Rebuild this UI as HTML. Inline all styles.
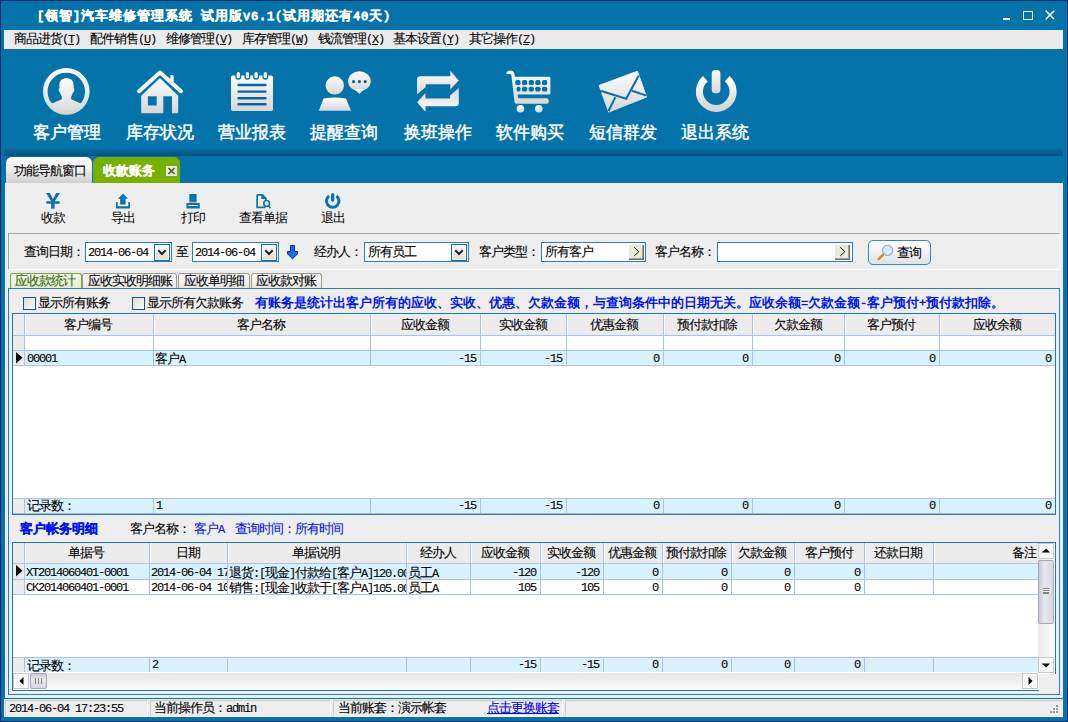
<!DOCTYPE html>
<html><head><meta charset="utf-8">
<style>
@font-face{font-family:"Liberation Mono";src:local("Liberation Mono");unicode-range:U+0020-007E;size-adjust:89.74%;}
*{box-sizing:border-box}
html,body{margin:0;padding:0;width:1068px;height:722px;overflow:hidden}
body{position:relative;background:#0373a9;font-family:"Liberation Mono","Liberation Sans",sans-serif;font-size:13px;letter-spacing:-1px;color:#000}
.a{position:absolute}
.t{position:absolute;white-space:nowrap;line-height:12px;margin-top:2px;-webkit-text-stroke:0.1px currentColor}
.n{margin-top:0}
.big{position:absolute;top:124px;letter-spacing:0;color:#fff;font-size:17px;font-weight:normal;-webkit-text-stroke:0.45px #fff;line-height:18px;white-space:nowrap;font-family:"Liberation Sans",sans-serif;}
.ico{position:absolute;top:60px;width:60px;height:60px}
.sb{position:absolute;top:213px;white-space:nowrap;line-height:12px;text-align:center}
.box{position:absolute;background:#fff;border:1px solid #2b7cba}
.dd{position:absolute;top:1px;right:1px;width:16px;height:17px;border:1px solid #0b6fb0;box-shadow:inset 0 0 0 1px #fff;background:linear-gradient(#fafafa,#dcdcdc)}
.gb{position:absolute;background:#ebe8d8;box-shadow:inset -1px -1px 0 #6e6b5c,inset -2px -2px 0 #aaa794}
.cb{position:absolute;width:13px;height:13px;border:1px solid #1c5180;background:linear-gradient(135deg,#dcdcd6,#fdfdfd)}
.g{position:absolute;overflow:hidden;background:#fff}
.hl{position:absolute;background:#a9c2f0}
.st{position:absolute;top:700px;height:17px;border:1px solid #d0ccbe;border-right-color:#fff;border-bottom-color:#fff;background:#ededed}
</style></head><body>

<!-- window border -->
<div class="a" style="left:0;top:0;width:1068px;height:722px;border:1px solid #082a68"></div>
<!-- title -->
<div class="t" style="left:37px;top:9px;color:#fff;font-weight:bold;font-size:13px;letter-spacing:1px;-webkit-text-stroke:0.35px #fff">[领智]汽车维修管理系统 试用版v6.1(试用期还有40天)</div>
<!-- window controls -->
<div class="a" style="left:1003px;top:18px;width:7px;height:2px;background:#fff"></div>
<div class="a" style="left:1023px;top:11px;width:10px;height:9px;border:1.4px solid #fff"></div>
<svg class="a" style="left:1045px;top:10px" width="10" height="10"><path d="M0.8 0.8L9.2 9.2M9.2 0.8L0.8 9.2" stroke="#fff" stroke-width="1.6"/></svg>
<!-- menu -->
<div class="a" style="left:4px;top:30px;width:1059px;height:19px;background:#ececec"></div>
<div class="t" style="left:14px;top:32px">商品进货(<u>T</u>)</div>
<div class="t" style="left:90px;top:32px">配件销售(<u>U</u>)</div>
<div class="t" style="left:166px;top:32px">维修管理(<u>V</u>)</div>
<div class="t" style="left:242px;top:32px">库存管理(<u>W</u>)</div>
<div class="t" style="left:318px;top:32px">钱流管理(<u>X</u>)</div>
<div class="t" style="left:393px;top:32px">基本设置(<u>Y</u>)</div>
<div class="t" style="left:469px;top:32px">其它操作(<u>Z</u>)</div>

<!-- big toolbar labels -->
<div class="big" style="left:33px">客户管理</div>
<div class="big" style="left:126px">库存状况</div>
<div class="big" style="left:218px">营业报表</div>
<div class="big" style="left:310px">提醒查询</div>
<div class="big" style="left:404px">换班操作</div>
<div class="big" style="left:496px">软件购买</div>
<div class="big" style="left:589px">短信群发</div>
<div class="big" style="left:681px">退出系统</div>

<!-- toolbar shadow band -->
<div class="a" style="left:4px;top:148px;width:1059px;height:8px;background:linear-gradient(#0670a6,#005080)"></div>

<!-- tabs -->
<div class="a" style="left:6px;top:157px;width:86px;height:26px;border-radius:6px 6px 0 0;background:linear-gradient(#ffffff,#f2f2f2 40%,#cfcfcf)"></div>
<div class="t" style="left:14px;top:164px">功能导航窗口</div>
<div class="a" style="left:93px;top:157px;width:87px;height:26px;border-radius:6px 6px 0 0;background:#78b000"></div>
<div class="t" style="left:103px;top:164px;color:#fff;font-weight:bold;letter-spacing:0;-webkit-text-stroke:0.3px #fff">收款账务</div>
<div class="a" style="left:166px;top:166px;width:11px;height:10px;background:#e8e8e8"></div>
<svg class="a" style="left:166px;top:166px" width="11" height="10"><path d="M2.5 2L8.5 8M8.5 2L2.5 8" stroke="#3d5f12" stroke-width="1.5"/></svg>

<!-- content panel -->
<div class="a" style="left:5px;top:183px;width:1058px;height:515px;background:#eeeeee"></div>

<!-- big icons -->
<svg class="ico" style="left:36px" viewBox="0 0 60 60"><defs><linearGradient id="g1" x1="0" y1="0" x2="0" y2="1"><stop offset="0" stop-color="#fefefe"/><stop offset="1" stop-color="#d6d6d6"/></linearGradient><clipPath id="c1"><circle cx="30.3" cy="31.4" r="19.2"/></clipPath></defs>
<circle cx="30.3" cy="31.4" r="21" fill="none" stroke="url(#g1)" stroke-width="4.6"/>
<g clip-path="url(#c1)" fill="url(#g1)"><path d="M30.5 18.2 C35.6 18.2 37.8 21 37.6 26 L37.6 28.3 Q38.7 28.6 38.3 30.5 Q37.9 32.3 37 32.6 Q36.2 35 35.2 36.5 L35.2 39.3 L44.8 43.4 L51 46 L51 56 L10 56 L10 46 L16 43.4 L25.8 39.3 L25.8 36.5 Q24.8 35 24 32.6 Q23.1 32.3 22.7 30.5 Q22.3 28.6 23.4 28.3 L23.4 26 C23.2 21 25.4 18.2 30.5 18.2Z"/></g></svg>

<svg class="ico" style="left:130px" viewBox="0 0 60 60"><defs><linearGradient id="g2" x1="0" y1="0" x2="0" y2="1"><stop offset="0" stop-color="#fefefe"/><stop offset="1" stop-color="#d6d6d6"/></linearGradient></defs>
<path d="M9 31.2 L30 12.6 L51 31.2" fill="none" stroke="#f8f8f8" stroke-width="4" stroke-linecap="round" stroke-linejoin="round"/>
<rect x="40.3" y="15" width="3.4" height="9" rx="1" fill="#f6f6f6"/>
<path d="M11.2 35.8 L30 17.9 L48.2 35.8 L48.2 52.3 Q48.2 53.3 47.2 53.3 L42 53.3 L42 36.2 L33.3 36.2 L33.3 53.3 L12.2 53.3 Q11.2 53.3 11.2 52.3 Z M17.9 36.2 L17.9 45.4 L26.7 45.4 L26.7 36.2Z" fill="url(#g2)" fill-rule="evenodd"/></svg>

<svg class="ico" style="left:222px" viewBox="0 0 60 60"><defs><linearGradient id="g3" x1="0" y1="0" x2="0" y2="1"><stop offset="0" stop-color="#fefefe"/><stop offset="1" stop-color="#d6d6d6"/></linearGradient></defs>
<rect x="9" y="15.4" width="42" height="35.7" rx="1.8" fill="url(#g3)"/>
<g fill="#fafafa" stroke="#0373a9" stroke-width="1.3"><rect x="14" y="11.4" width="4.6" height="7.6" rx="2.3"/><rect x="23.1" y="11.4" width="4.6" height="7.6" rx="2.3"/><rect x="31.8" y="11.4" width="4.6" height="7.6" rx="2.3"/><rect x="41" y="11.4" width="4.6" height="7.6" rx="2.3"/></g>
<g stroke="#0765a0" stroke-width="2.4" stroke-linecap="round"><path d="M16.5 25H43.5M16.5 31.6H43.5M16.5 38.2H43.5M16.5 44.2H43.5"/></g></svg>

<svg class="ico" style="left:314px" viewBox="0 0 60 60"><defs><linearGradient id="g4" x1="0" y1="0" x2="0" y2="1"><stop offset="0" stop-color="#fefefe"/><stop offset="1" stop-color="#d6d6d6"/></linearGradient></defs>
<g fill="url(#g4)"><circle cx="20.8" cy="25.4" r="9.2"/><path d="M9.5 38.6 Q20.8 36.3 32 38.6 L37 50.8 L4.8 50.8 Z"/>
<ellipse cx="45.4" cy="21.2" rx="11.3" ry="10"/><path d="M40 29 L45.5 34 L50 29Z"/></g>
<g fill="#0765a0"><circle cx="39.6" cy="21.6" r="1.6"/><circle cx="45.4" cy="21.6" r="1.6"/><circle cx="51.2" cy="21.6" r="1.6"/></g></svg>

<svg class="ico" style="left:407px" viewBox="0 0 60 60"><defs><linearGradient id="g5" x1="0" y1="0" x2="0" y2="1"><stop offset="0" stop-color="#fefefe"/><stop offset="1" stop-color="#d6d6d6"/></linearGradient></defs>
<g fill="url(#g5)"><path d="M10 19.5 Q10 16.25 13.2 16.25 L43.3 16.25 L43.3 10.8 L51.7 20.4 L43.3 29.6 L43.3 24.2 L18.75 24.2 L18.75 27 L10 34.6 Z"/>
<path d="M10 19.5 Q10 16.25 13.2 16.25 L43.3 16.25 L43.3 10.8 L51.7 20.4 L43.3 29.6 L43.3 24.2 L18.75 24.2 L18.75 27 L10 34.6 Z" transform="rotate(180 30.9 31.3)"/></g></svg>

<svg class="ico" style="left:500px" viewBox="0 0 60 60"><defs><linearGradient id="g6" x1="0" y1="0" x2="0" y2="1"><stop offset="0" stop-color="#fefefe"/><stop offset="1" stop-color="#d6d6d6"/></linearGradient></defs>
<g fill="url(#g6)"><path d="M6.3 13.8 Q6.5 10.6 10.5 10.6 Q13.4 10.6 14.3 13.3 L14.8 16.7 L49 16.7 Q50.4 16.7 50.4 18.2 L50.4 33.2 Q50.4 34.6 49 34.6 L17.6 34.6 L18.2 38.3 L47 38.3 Q48.8 38.3 48.8 41 Q48.8 43.8 47 43.8 L16.5 43.8 Q14.7 43.8 14.5 42 L11.3 14.5 Q10.5 13.6 8 14.2 Z"/>
<circle cx="20.4" cy="48.8" r="3.8"/><circle cx="38.8" cy="48.8" r="3.8"/></g>
<g fill="#0373a9"><rect x="15.3" y="20.1" width="5.2" height="4.9" rx="1.6"/><rect x="22.0" y="20.1" width="5.2" height="4.9" rx="1.6"/><rect x="28.7" y="20.1" width="5.2" height="4.9" rx="1.6"/><rect x="35.3" y="20.1" width="5.2" height="4.9" rx="1.6"/><rect x="42.0" y="20.1" width="5.2" height="4.9" rx="1.6"/>
<rect x="16.6" y="26.7" width="3.9" height="4.9" rx="1.6"/><rect x="22.0" y="26.7" width="5.2" height="4.9" rx="1.6"/><rect x="28.7" y="26.7" width="5.2" height="4.9" rx="1.6"/><rect x="35.3" y="26.7" width="5.2" height="4.9" rx="1.6"/><rect x="42.0" y="26.7" width="5.2" height="4.9" rx="1.6"/></g></svg>

<svg class="ico" style="left:592px" viewBox="0 0 60 60"><defs><linearGradient id="g7" x1="0" y1="0" x2="0" y2="1"><stop offset="0" stop-color="#fefefe"/><stop offset="1" stop-color="#d6d6d6"/></linearGradient></defs>
<path d="M7.1 25.4 L45.4 11.25 L54.6 37.1 L16.7 52.1 Z" fill="url(#g7)" stroke="url(#g7)" stroke-width="1" stroke-linejoin="round"/>
<g fill="none" stroke="#0670aa" stroke-width="2"><path d="M8.3 30.8 L34.2 38.8 L46.8 15.6"/><path d="M23.3 37.3 L16.5 51"/><path d="M40 30.8 L54.4 35.6"/></g></svg>

<svg class="ico" style="left:685px" viewBox="0 0 60 60"><defs><linearGradient id="g8" x1="0" y1="0" x2="0" y2="1"><stop offset="0" stop-color="#fefefe"/><stop offset="1" stop-color="#d6d6d6"/></linearGradient></defs>
<rect x="26.7" y="10" width="8.7" height="23.3" rx="3.6" fill="url(#g8)"/>
<path d="M20.4 18.7 A16.85 16.85 0 1 0 42.1 18.7" fill="none" stroke="url(#g8)" stroke-width="7.1"/></svg>

<!-- small toolbar -->
<svg class="a" style="left:42px;top:190px" width="24" height="22" viewBox="0 0 24 22"><g fill="#0a72ae"><path d="M4.1 3 L7.8 3 L11 9 L14.2 3 L18 3 L12.8 11.3 L17.7 11.3 L17.7 13.7 L12.6 13.7 L12.6 18.75 L9.1 18.75 L9.1 13.7 L4.3 13.7 L4.3 11.3 L9.2 11.3 Z"/></g></svg>
<svg class="a" style="left:112px;top:190px" width="24" height="22" viewBox="0 0 24 22"><g fill="#0a72ae"><path d="M11 3.5 L16 8.7 L13.6 8.7 L13.6 14.6 L8.2 14.6 L8.2 8.7 L5.9 8.7Z"/><path d="M4 11.9 L5.7 11.9 L5.7 16.3 L16.3 16.3 L16.3 11.9 L18 11.9 L18 18.6 L4 18.6Z"/></g></svg>
<svg class="a" style="left:182px;top:190px" width="24" height="22" viewBox="0 0 24 22"><rect x="7.3" y="4" width="7.3" height="7.9" fill="#0a72ae"/><rect x="7.3" y="11.9" width="7.3" height="1.2" fill="#8ab8d4"/><path d="M4.4 13.1 H17.8 V18.6 H4.4Z M6.25 14.9 V16 H16 V14.9Z" fill="#0a72ae" fill-rule="evenodd"/></svg>
<svg class="a" style="left:252px;top:190px" width="24" height="22" viewBox="0 0 24 22"><path d="M5.15 4.85 H10.5 L13.8 8.3 V11" fill="none" stroke="#0a72ae" stroke-width="1.7"/><path d="M5.15 4.5 V17.45 H13.5" fill="none" stroke="#0a72ae" stroke-width="1.7"/><path d="M9.3 4.2 L14.6 9 L9.3 9Z" fill="#0a72ae"/><circle cx="14.6" cy="13.4" r="2.9" fill="none" stroke="#0a72ae" stroke-width="1.5"/><path d="M16.3 15.4 L18.3 18.3" stroke="#0a72ae" stroke-width="1.6"/></svg>
<svg class="a" style="left:321px;top:190px" width="24" height="22" viewBox="0 0 24 22"><rect x="10" y="3" width="3.3" height="8.7" rx="1.6" fill="#0a72ae"/><path d="M8.1 6 A6.25 6.25 0 1 0 15.4 6" fill="none" stroke="#0a72ae" stroke-width="3"/></svg>
<div class="sb" style="left:40px;width:25px">收款</div>
<div class="sb" style="left:110px;width:25px">导出</div>
<div class="sb" style="left:180px;width:25px">打印</div>
<div class="sb" style="left:238px;width:49px">查看单据</div>
<div class="sb" style="left:320px;width:25px">退出</div>
<!-- query groupbox -->
<div class="a" style="left:8px;top:233px;width:1052px;height:37px;border:1px solid #a8a494;border-right-color:#fff;border-bottom-color:#fff"></div>
<div class="t" style="left:24px;top:245px">查询日期：</div>
<div class="box" style="left:85px;top:242px;width:87px;height:20px"><span class="t n" style="left:2px;top:4px">2014-06-04</span><div class="dd"><svg width="15" height="15" style="position:absolute;left:0;top:0"><path d="M3.3 5.3 L7 9 L10.7 5.3" fill="none" stroke="#222" stroke-width="2"/></svg></div></div>
<div class="t" style="left:176px;top:245px">至</div>
<div class="box" style="left:192px;top:242px;width:87px;height:20px"><span class="t n" style="left:2px;top:4px">2014-06-04</span><div class="dd"><svg width="15" height="15" style="position:absolute;left:0;top:0"><path d="M3.3 5.3 L7 9 L10.7 5.3" fill="none" stroke="#222" stroke-width="2"/></svg></div></div>
<svg class="a" style="left:286px;top:244px" width="13" height="16" viewBox="0 0 13 16"><path d="M4.5 1.5 H8.5 V7.5 H11.5 V9.8 L6.5 14.8 L1.5 9.8 V7.5 H4.5Z" fill="#1270e2" stroke="#0626a0" stroke-width="1"/></svg>
<div class="t" style="left:314px;top:245px">经办人：</div>
<div class="box" style="left:364px;top:242px;width:105px;height:20px"><span class="t" style="left:3px;top:2px">所有员工</span><div class="dd"><svg width="15" height="15" style="position:absolute;left:0;top:0"><path d="M3.3 5.3 L7 9 L10.7 5.3" fill="none" stroke="#222" stroke-width="2"/></svg></div></div>
<div class="t" style="left:479px;top:245px">客户类型：</div>
<div class="box" style="left:541px;top:242px;width:105px;height:20px"><span class="t" style="left:3px;top:2px">所有客户</span><div class="gb" style="left:87px;top:2px;width:15px;height:15px"><svg width="15" height="15" style="position:absolute;left:0;top:0"><path d="M5.3 2.3 L9.8 6.6 L5.3 10.9" fill="none" stroke="#111" stroke-width="1"/></svg></div></div>
<div class="t" style="left:655px;top:245px">客户名称：</div>
<div class="box" style="left:717px;top:242px;width:136px;height:20px"><div class="gb" style="left:117px;top:2px;width:15px;height:15px"><svg width="15" height="15" style="position:absolute;left:0;top:0"><path d="M5.3 2.3 L9.8 6.6 L5.3 10.9" fill="none" stroke="#111" stroke-width="1"/></svg></div></div>
<div class="a" style="left:868px;top:240px;width:63px;height:25px;border:1px solid #2f8dc2;border-radius:5px;background:linear-gradient(#fefefe,#f2f2f2 50%,#e2e2e2)"></div>
<div class="t" style="left:897px;top:246px">查询</div>
<svg class="a" style="left:876px;top:243px" width="18" height="18" viewBox="0 0 18 18"><path d="M2.6 16.2 L7 11.8" stroke="#c8902a" stroke-width="2.4" stroke-linecap="round"/><circle cx="11.6" cy="7.4" r="5.1" fill="#c6f2fb" stroke="#a49ce6" stroke-width="1.1"/><circle cx="13.4" cy="9" r="1.3" fill="#fff"/></svg>
<!-- sub tabs -->
<div class="a" style="left:82px;top:273px;width:95px;height:16px;border:1px solid #9c9a8c;border-bottom:none;border-radius:3px 3px 0 0;background:linear-gradient(#fefefe,#e6e4dc)"></div>
<div class="a" style="left:178px;top:273px;width:72px;height:16px;border:1px solid #9c9a8c;border-bottom:none;border-radius:3px 3px 0 0;background:linear-gradient(#fefefe,#e6e4dc)"></div>
<div class="a" style="left:251px;top:273px;width:71px;height:16px;border:1px solid #9c9a8c;border-bottom:none;border-radius:3px 3px 0 0;background:linear-gradient(#fefefe,#e6e4dc)"></div>
<div class="a" style="left:10px;top:273px;width:72px;height:17px;border:1px solid #7aa23c;border-bottom:none;border-radius:3px 3px 0 0;background:linear-gradient(#f4f8ec,#e0ecd0)"></div>
<div class="t" style="left:15px;top:274px;color:#386a08">应收款统计</div>
<div class="t" style="left:88px;top:274px">应收实收明细账</div>
<div class="t" style="left:184px;top:274px">应收单明细</div>
<div class="t" style="left:256px;top:274px">应收款对账</div>
<!-- panel 1 -->
<div class="a" style="left:8px;top:288px;width:1052px;height:407px;border:1px solid #2a80bc;background:#eeeeee"></div>
<div class="cb" style="left:23px;top:297px"></div>
<div class="t" style="left:38px;top:296px">显示所有账务</div>
<div class="cb" style="left:132px;top:297px"></div>
<div class="t" style="left:147px;top:296px">显示所有欠款账务</div>
<div class="t" style="left:255px;top:296px;color:#0018f0;font-weight:bold;letter-spacing:0;-webkit-text-stroke:0">有账务是统计出客户所有的应收、实收、优惠、欠款金额，与查询条件中的日期无关。应收余额=欠款金额-客户预付+预付款扣除。</div>
<!-- grid1 -->
<div class="g" style="left:12px;top:313px;width:1044px;height:202px;border:1px solid #1c78b6;border-right:none"></div>
<div class="a" style="left:13px;top:314px;width:1042px;height:21px;background:#ececec"></div>
<div class="a" style="left:25px;top:351px;width:1030px;height:14px;background:#daf2fe"></div>
<div class="a" style="left:25px;top:499px;width:1030px;height:15px;background:#daf2fe"></div>
<div class="a" style="left:13px;top:336px;width:11px;height:29px;background:#ececec"></div>
<div class="a" style="left:13px;top:499px;width:11px;height:15px;background:#ececec"></div>
<div class="hl" style="left:13px;top:335px;width:1042px;height:1px"></div>
<div class="hl" style="left:13px;top:350px;width:1042px;height:1px"></div>
<div class="hl" style="left:13px;top:365px;width:1042px;height:1px"></div>
<div class="hl" style="left:13px;top:498px;width:1042px;height:1px"></div>
<div class="hl" style="left:13px;top:513px;width:1042px;height:1px"></div>
<div class="hl" style="left:24px;top:314px;width:1px;height:51px"></div>
<div class="a" style="left:25px;top:314px;width:1px;height:21px;background:#fff"></div>
<div class="hl" style="left:24px;top:499px;width:1px;height:15px"></div>
<div class="hl" style="left:153px;top:314px;width:1px;height:51px"></div>
<div class="a" style="left:154px;top:314px;width:1px;height:21px;background:#fff"></div>
<div class="hl" style="left:153px;top:499px;width:1px;height:15px"></div>
<div class="hl" style="left:370px;top:314px;width:1px;height:51px"></div>
<div class="a" style="left:371px;top:314px;width:1px;height:21px;background:#fff"></div>
<div class="hl" style="left:370px;top:499px;width:1px;height:15px"></div>
<div class="hl" style="left:480px;top:314px;width:1px;height:51px"></div>
<div class="a" style="left:481px;top:314px;width:1px;height:21px;background:#fff"></div>
<div class="hl" style="left:480px;top:499px;width:1px;height:15px"></div>
<div class="hl" style="left:566px;top:314px;width:1px;height:51px"></div>
<div class="a" style="left:567px;top:314px;width:1px;height:21px;background:#fff"></div>
<div class="hl" style="left:566px;top:499px;width:1px;height:15px"></div>
<div class="hl" style="left:663px;top:314px;width:1px;height:51px"></div>
<div class="a" style="left:664px;top:314px;width:1px;height:21px;background:#fff"></div>
<div class="hl" style="left:663px;top:499px;width:1px;height:15px"></div>
<div class="hl" style="left:752px;top:314px;width:1px;height:51px"></div>
<div class="a" style="left:753px;top:314px;width:1px;height:21px;background:#fff"></div>
<div class="hl" style="left:752px;top:499px;width:1px;height:15px"></div>
<div class="hl" style="left:844px;top:314px;width:1px;height:51px"></div>
<div class="a" style="left:845px;top:314px;width:1px;height:21px;background:#fff"></div>
<div class="hl" style="left:844px;top:499px;width:1px;height:15px"></div>
<div class="hl" style="left:939px;top:314px;width:1px;height:51px"></div>
<div class="a" style="left:940px;top:314px;width:1px;height:21px;background:#fff"></div>
<div class="hl" style="left:939px;top:499px;width:1px;height:15px"></div>
<div class="a" style="left:1055px;top:313px;width:1px;height:202px;background:#1c78b6"></div>
<div class="t" style="left:24px;top:318px;width:128px;text-align:center">客户编号</div>
<div class="t" style="left:153px;top:318px;width:216px;text-align:center">客户名称</div>
<div class="t" style="left:370px;top:318px;width:109px;text-align:center">应收金额</div>
<div class="t" style="left:480px;top:318px;width:85px;text-align:center">实收金额</div>
<div class="t" style="left:566px;top:318px;width:96px;text-align:center">优惠金额</div>
<div class="t" style="left:663px;top:318px;width:88px;text-align:center">预付款扣除</div>
<div class="t" style="left:752px;top:318px;width:91px;text-align:center">欠款金额</div>
<div class="t" style="left:844px;top:318px;width:94px;text-align:center">客户预付</div>
<div class="t" style="left:939px;top:318px;width:115px;text-align:center">应收余额</div>
<svg class="a" style="left:16px;top:352px" width="7" height="12"><path d="M0 0 L6.5 5.8 L0 11.5Z" fill="#000"/></svg>
<div class="t n" style="left:27px;top:353px">00001</div>
<div class="t" style="left:155px;top:352px">客户A</div>
<div class="t n" style="left:280px;top:353px;width:196px;text-align:right">-15</div>
<div class="t n" style="left:366px;top:353px;width:196px;text-align:right">-15</div>
<div class="t n" style="left:463px;top:353px;width:196px;text-align:right">0</div>
<div class="t n" style="left:552px;top:353px;width:196px;text-align:right">0</div>
<div class="t n" style="left:644px;top:353px;width:196px;text-align:right">0</div>
<div class="t n" style="left:739px;top:353px;width:196px;text-align:right">0</div>
<div class="t n" style="left:855px;top:353px;width:196px;text-align:right">0</div>
<div class="t" style="left:27px;top:499px">记录数：</div>
<div class="t n" style="left:156px;top:500px">1</div>
<div class="t n" style="left:280px;top:500px;width:196px;text-align:right">-15</div>
<div class="t n" style="left:366px;top:500px;width:196px;text-align:right">-15</div>
<div class="t n" style="left:463px;top:500px;width:196px;text-align:right">0</div>
<div class="t n" style="left:552px;top:500px;width:196px;text-align:right">0</div>
<div class="t n" style="left:644px;top:500px;width:196px;text-align:right">0</div>
<div class="t n" style="left:739px;top:500px;width:196px;text-align:right">0</div>
<div class="t n" style="left:855px;top:500px;width:196px;text-align:right">0</div>
<!-- grid2 -->
<div class="t" style="left:20px;top:522px;color:#0018f0;font-weight:bold;letter-spacing:0;-webkit-text-stroke:0.3px #0018f0">客户帐务明细</div>
<div class="t" style="left:130px;top:522px">客户名称：</div>
<div class="t" style="left:194px;top:522px;color:#0018f0">客户A</div>
<div class="t" style="left:235px;top:522px;color:#0018f0">查询时间：所有时间</div>
<div class="g" style="left:12px;top:542px;width:1044px;height:149px;border-top:1px solid #1c78b6;border-left:1px solid #1c78b6"></div>
<div class="a" style="left:1055px;top:542px;width:1px;height:132px;background:#1c78b6"></div>
<div class="a" style="left:12px;top:690px;width:1027px;height:1px;background:#1c78b6"></div>
<div class="a" style="left:1039px;top:674px;width:17px;height:17px;background:#eeeeee"></div>
<div class="a" style="left:13px;top:543px;width:1025px;height:20px;background:#ececec"></div>
<div class="a" style="left:25px;top:564px;width:1013px;height:15px;background:#daf2fe"></div>
<div class="a" style="left:25px;top:658px;width:1013px;height:14px;background:#daf2fe"></div>
<div class="a" style="left:13px;top:564px;width:11px;height:30px;background:#ececec"></div>
<div class="a" style="left:13px;top:658px;width:11px;height:14px;background:#ececec"></div>
<div class="hl" style="left:13px;top:563px;width:1025px;height:1px"></div>
<div class="hl" style="left:13px;top:579px;width:1025px;height:1px"></div>
<div class="hl" style="left:13px;top:594px;width:1025px;height:1px"></div>
<div class="hl" style="left:13px;top:657px;width:1025px;height:1px"></div>
<div class="hl" style="left:24px;top:543px;width:1px;height:51px"></div>
<div class="a" style="left:25px;top:543px;width:1px;height:20px;background:#fff"></div>
<div class="hl" style="left:24px;top:658px;width:1px;height:14px"></div>
<div class="hl" style="left:149px;top:543px;width:1px;height:51px"></div>
<div class="a" style="left:150px;top:543px;width:1px;height:20px;background:#fff"></div>
<div class="hl" style="left:149px;top:658px;width:1px;height:14px"></div>
<div class="hl" style="left:227px;top:543px;width:1px;height:51px"></div>
<div class="a" style="left:228px;top:543px;width:1px;height:20px;background:#fff"></div>
<div class="hl" style="left:227px;top:658px;width:1px;height:14px"></div>
<div class="hl" style="left:406px;top:543px;width:1px;height:51px"></div>
<div class="a" style="left:407px;top:543px;width:1px;height:20px;background:#fff"></div>
<div class="hl" style="left:406px;top:658px;width:1px;height:14px"></div>
<div class="hl" style="left:470px;top:543px;width:1px;height:51px"></div>
<div class="a" style="left:471px;top:543px;width:1px;height:20px;background:#fff"></div>
<div class="hl" style="left:470px;top:658px;width:1px;height:14px"></div>
<div class="hl" style="left:540px;top:543px;width:1px;height:51px"></div>
<div class="a" style="left:541px;top:543px;width:1px;height:20px;background:#fff"></div>
<div class="hl" style="left:540px;top:658px;width:1px;height:14px"></div>
<div class="hl" style="left:603px;top:543px;width:1px;height:51px"></div>
<div class="a" style="left:604px;top:543px;width:1px;height:20px;background:#fff"></div>
<div class="hl" style="left:603px;top:658px;width:1px;height:14px"></div>
<div class="hl" style="left:662px;top:543px;width:1px;height:51px"></div>
<div class="a" style="left:663px;top:543px;width:1px;height:20px;background:#fff"></div>
<div class="hl" style="left:662px;top:658px;width:1px;height:14px"></div>
<div class="hl" style="left:731px;top:543px;width:1px;height:51px"></div>
<div class="a" style="left:732px;top:543px;width:1px;height:20px;background:#fff"></div>
<div class="hl" style="left:731px;top:658px;width:1px;height:14px"></div>
<div class="hl" style="left:794px;top:543px;width:1px;height:51px"></div>
<div class="a" style="left:795px;top:543px;width:1px;height:20px;background:#fff"></div>
<div class="hl" style="left:794px;top:658px;width:1px;height:14px"></div>
<div class="hl" style="left:864px;top:543px;width:1px;height:51px"></div>
<div class="a" style="left:865px;top:543px;width:1px;height:20px;background:#fff"></div>
<div class="hl" style="left:864px;top:658px;width:1px;height:14px"></div>
<div class="hl" style="left:933px;top:543px;width:1px;height:51px"></div>
<div class="a" style="left:934px;top:543px;width:1px;height:20px;background:#fff"></div>
<div class="hl" style="left:933px;top:658px;width:1px;height:14px"></div>
<div class="t" style="left:24px;top:546px;width:124px;text-align:center">单据号</div>
<div class="t" style="left:149px;top:546px;width:77px;text-align:center">日期</div>
<div class="t" style="left:227px;top:546px;width:178px;text-align:center">单据说明</div>
<div class="t" style="left:406px;top:546px;width:63px;text-align:center">经办人</div>
<div class="t" style="left:470px;top:546px;width:69px;text-align:center">应收金额</div>
<div class="t" style="left:540px;top:546px;width:62px;text-align:center">实收金额</div>
<div class="t" style="left:603px;top:546px;width:58px;text-align:center">优惠金额</div>
<div class="t" style="left:662px;top:546px;width:68px;text-align:center">预付款扣除</div>
<div class="t" style="left:731px;top:546px;width:62px;text-align:center">欠款金额</div>
<div class="t" style="left:794px;top:546px;width:69px;text-align:center">客户预付</div>
<div class="t" style="left:864px;top:546px;width:68px;text-align:center">还款日期</div>
<div class="t" style="left:933px;top:546px;width:103px;text-align:right">备注</div>
<svg class="a" style="left:16px;top:565px" width="7" height="12"><path d="M0 0 L6.5 5.8 L0 11.5Z" fill="#000"/></svg>
<div class="t n" style="left:26px;top:564px;padding-top:3px;width:123px;height:21px;overflow:hidden">XT2014060401-0001</div>
<div class="t n" style="left:151px;top:564px;padding-top:3px;width:76px;height:21px;overflow:hidden">2014-06-04 17:20:10</div>
<div class="t" style="left:229px;top:563px;padding-top:3px;width:177px;height:21px;overflow:hidden">退货:[现金]付款给[客户A]120.00</div>
<div class="t" style="left:408px;top:563px;padding-top:3px;width:62px;height:21px;overflow:hidden">员工A</div>
<div class="t n" style="left:440px;top:567px;width:96px;text-align:right">-120</div>
<div class="t n" style="left:503px;top:567px;width:96px;text-align:right">-120</div>
<div class="t n" style="left:562px;top:567px;width:96px;text-align:right">0</div>
<div class="t n" style="left:631px;top:567px;width:96px;text-align:right">0</div>
<div class="t n" style="left:694px;top:567px;width:96px;text-align:right">0</div>
<div class="t n" style="left:764px;top:567px;width:96px;text-align:right">0</div>
<div class="t n" style="left:26px;top:579px;padding-top:3px;width:123px;height:21px;overflow:hidden">CK2014060401-0001</div>
<div class="t n" style="left:151px;top:579px;padding-top:3px;width:76px;height:21px;overflow:hidden">2014-06-04 10:10:10</div>
<div class="t" style="left:229px;top:578px;padding-top:3px;width:177px;height:21px;overflow:hidden">销售:[现金]收款于[客户A]105.00</div>
<div class="t" style="left:408px;top:578px;padding-top:3px;width:62px;height:21px;overflow:hidden">员工A</div>
<div class="t n" style="left:440px;top:582px;width:96px;text-align:right">105</div>
<div class="t n" style="left:503px;top:582px;width:96px;text-align:right">105</div>
<div class="t n" style="left:562px;top:582px;width:96px;text-align:right">0</div>
<div class="t n" style="left:631px;top:582px;width:96px;text-align:right">0</div>
<div class="t n" style="left:694px;top:582px;width:96px;text-align:right">0</div>
<div class="t n" style="left:764px;top:582px;width:96px;text-align:right">0</div>
<div class="t" style="left:27px;top:659px">记录数：</div>
<div class="t n" style="left:152px;top:659px">2</div>
<div class="t n" style="left:440px;top:659px;width:96px;text-align:right">-15</div>
<div class="t n" style="left:503px;top:659px;width:96px;text-align:right">-15</div>
<div class="t n" style="left:562px;top:659px;width:96px;text-align:right">0</div>
<div class="t n" style="left:631px;top:659px;width:96px;text-align:right">0</div>
<div class="t n" style="left:694px;top:659px;width:96px;text-align:right">0</div>
<div class="t n" style="left:764px;top:659px;width:96px;text-align:right">0</div>
<div class="a" style="left:1038px;top:543px;width:16px;height:130px;background:linear-gradient(90deg,#ececec,#fafafa)"></div>
<div class="a" style="left:1038px;top:543px;width:16px;height:16px;border:1px solid #c8c8c8;background:linear-gradient(90deg,#f4f4f4,#fdfdfd)"></div>
<svg class="a" style="left:1042px;top:548px" width="8" height="5"><path d="M0 4.5 L4 0.5 L8 4.5Z" fill="#000"/></svg>
<div class="a" style="left:1038px;top:560px;width:16px;height:64px;border:1px solid #a8a8b8;border-radius:2px;background:linear-gradient(90deg,#c8c8d8,#e8e8f2 40%,#d8d8e4)"></div>
<div class="a" style="left:1043px;top:588px;width:6px;height:6px;border-top:1px solid #8c8470;border-bottom:1px solid #8c8470;background:linear-gradient(#eee 0,#eee 1px,#8c8470 1px,#8c8470 2px,#eee 2px,#eee 3px,#8c8470 3px,#8c8470 4px,#eee 4px)"></div>
<div class="a" style="left:1038px;top:657px;width:16px;height:16px;border:1px solid #c8c8c8;background:linear-gradient(90deg,#f4f4f4,#fdfdfd)"></div>
<svg class="a" style="left:1042px;top:663px" width="8" height="5"><path d="M0 0.5 L4 4.5 L8 0.5Z" fill="#000"/></svg>
<div class="a" style="left:13px;top:673px;width:1025px;height:16px;background:linear-gradient(#e6e6e6,#fafafa)"></div>
<div class="a" style="left:13px;top:673px;width:16px;height:16px;border:1px solid #c8c8c8;background:linear-gradient(#f4f4f4,#fdfdfd)"></div>
<svg class="a" style="left:19px;top:677px" width="5" height="8"><path d="M4.5 0 L0.5 4 L4.5 8Z" fill="#000"/></svg>
<div class="a" style="left:30px;top:673px;width:17px;height:16px;border:1px solid #a8a8b8;border-radius:2px;background:linear-gradient(#c8c8d8,#e8e8f2 40%,#d8d8e4)"></div>
<div class="a" style="left:35px;top:678px;width:7px;height:6px;background:linear-gradient(90deg,#8c8470 0,#8c8470 1px,transparent 1px,transparent 3px,#8c8470 3px,#8c8470 4px,transparent 4px,transparent 6px,#8c8470 6px)"></div>
<div class="a" style="left:1022px;top:673px;width:16px;height:16px;border:1px solid #c8c8c8;background:linear-gradient(#f4f4f4,#fdfdfd)"></div>
<svg class="a" style="left:1028px;top:677px" width="5" height="8"><path d="M0.5 0 L4.5 4 L0.5 8Z" fill="#000"/></svg>
<!-- status -->
<div class="a" style="left:4px;top:699px;width:1059px;height:18px;background:#ececec"></div>
<div class="st" style="left:5px;width:143px"></div>
<div class="st" style="left:150px;width:181px"></div>
<div class="st" style="left:333px;width:230px"></div>
<div class="st" style="left:565px;width:498px"></div>
<div class="t n" style="left:9px;top:703px">2014-06-04 17:23:55</div>
<div class="t" style="left:154px;top:701px">当前操作员：admin</div>
<div class="t" style="left:338px;top:701px">当前账套：演示帐套</div>
<div class="t" style="left:487px;top:701px;color:#0000ee;text-decoration:underline">点击更换账套</div>
<svg class="a" style="left:1048px;top:704px" width="12" height="12"><g fill="#a09a88"><rect x="8" y="1" width="2" height="2"/><rect x="5" y="4" width="2" height="2"/><rect x="8" y="4" width="2" height="2"/><rect x="2" y="7" width="2" height="2"/><rect x="5" y="7" width="2" height="2"/><rect x="8" y="7" width="2" height="2"/></g></svg>
</body></html>
